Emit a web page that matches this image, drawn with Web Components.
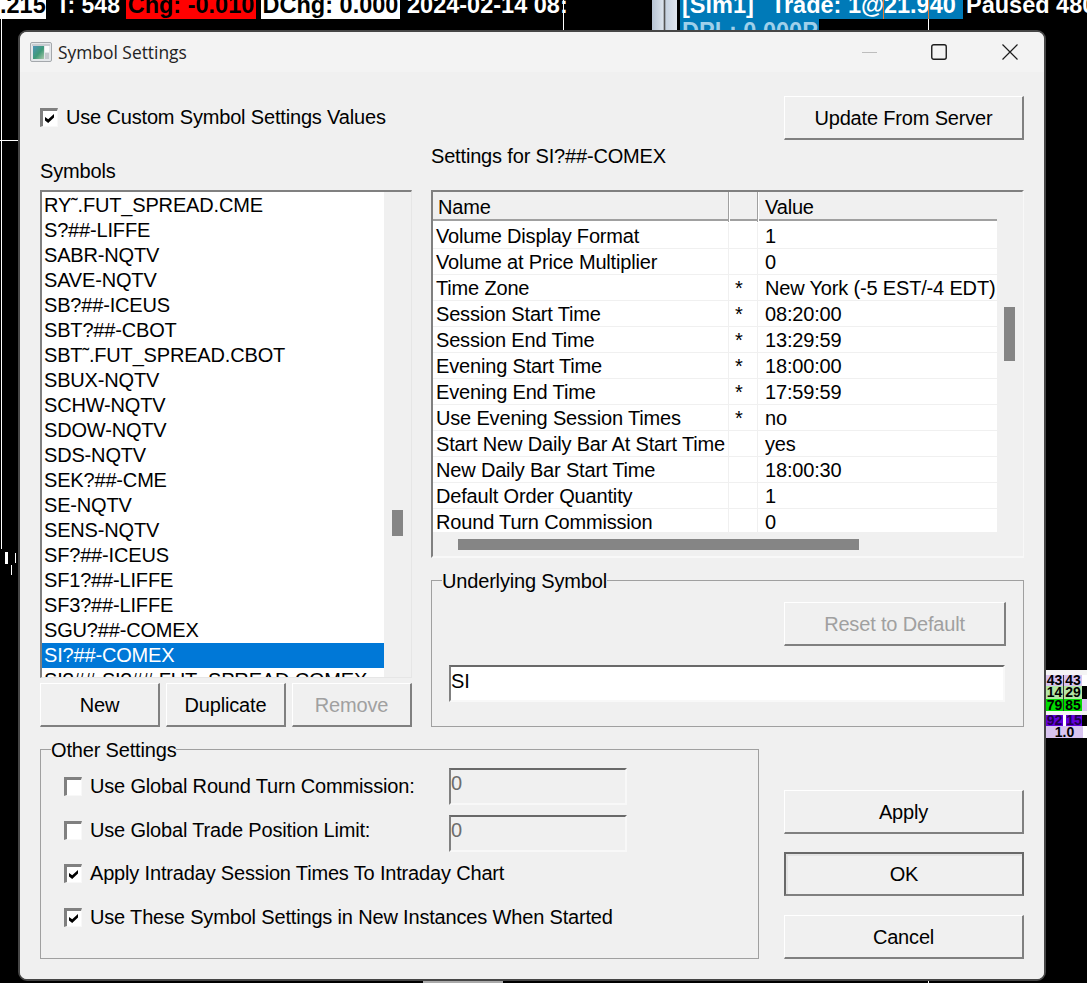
<!DOCTYPE html>
<html>
<head>
<meta charset="utf-8">
<title>Symbol Settings</title>
<style>
  html, body { margin: 0; padding: 0; background: #000; }
  body { font: 20px "Liberation Sans", Arial, sans-serif; color: #000; }
</style>
</head>
<body>
<chart-desktop>
  <symbol-dialog></symbol-dialog>
</chart-desktop>

<script>
const SYMBOLS = [
  "RY˜.FUT_SPREAD.CME", "S?##-LIFFE", "SABR-NQTV", "SAVE-NQTV", "SB?##-ICEUS", "SBT?##-CBOT",
  "SBT˜.FUT_SPREAD.CBOT", "SBUX-NQTV", "SCHW-NQTV", "SDOW-NQTV", "SDS-NQTV", "SEK?##-CME",
  "SE-NQTV", "SENS-NQTV", "SF?##-ICEUS", "SF1?##-LIFFE", "SF3?##-LIFFE", "SGU?##-COMEX",
  "SI?##-COMEX", "SI?##-SI?##.FUT_SPREAD.COMEX"
];

const SETTINGS = [
  ["Volume Display Format", "", "1"],
  ["Volume at Price Multiplier", "", "0"],
  ["Time Zone", "*", "New York (-5 EST/-4 EDT)"],
  ["Session Start Time", "*", "08:20:00"],
  ["Session End Time", "*", "13:29:59"],
  ["Evening Start Time", "*", "18:00:00"],
  ["Evening End Time", "*", "17:59:59"],
  ["Use Evening Session Times", "*", "no"],
  ["Start New Daily Bar At Start Time", "", "yes"],
  ["New Daily Bar Start Time", "", "18:00:30"],
  ["Default Order Quantity", "", "1"],
  ["Round Turn Commission", "", "0"]
];

class ChartDesktop extends HTMLElement {
  connectedCallback() {
    const shadowRoot = this.attachShadow({ mode: "open" });
    shadowRoot.innerHTML = `
    <style>
      :host { display: block; position: relative; width: 1087px; height: 983px; overflow: hidden; background: #000; }
      .lbl {
        position: absolute;
        top: -6px;
        height: 25px;
        font: bold 23.5px/23px "Liberation Sans", Arial, sans-serif;
        white-space: nowrap;
        color: #fff;
      }
      .dark { color: #000; }
      .mark { position: absolute; background: #fff; }
      .scroll { position: absolute; left: 652px; top: 0; width: 25px; height: 30px; background: linear-gradient(90deg, #b7c4d4, #dbe3ec 45%, #555 48%, #555 52%, #c6d2e0 55%, #e0e6ee); }
      .cells {
        position: absolute;
        left: 1046px;
        top: 670px;
        width: 41px;
        height: 68px;
        background: #fff;
        display: grid;
        grid-template-columns: 17px 19px 5px;
        grid-template-rows: 5px 11px 13px 12px 4px 11px 12px;
        font: bold 14px "Liberation Sans", Arial, sans-serif;
        text-align: center;
      }
      .cells div { overflow: hidden; }
      .top { grid-column: 1 / 4; background: #f4f4f4; }
      .fill { grid-column: 1 / 4; background: #f4f4f4; }
      .li { background: #d6c2ee; line-height: 11px; }
      .lg { background: #b4e6a4; line-height: 13px; }
      .gr { background: #00dc00; line-height: 12px; }
      .pu { background: #6400dc; color: #20004a; line-height: 11px; }
      .sep { border-left: 1px solid #333; }
      .bk { background: #000; }
      .wide { grid-column: 1 / 4; background: #d8c4f0; line-height: 12px; margin-right: 4px; }
    </style>
    <div class="lbl dark" style="left:0;width:46px;background:#fff">.215</div>
    <div class="lbl" style="left:56px;font-size:23px">T: 548</div>
    <div class="lbl dark" style="left:126px;width:130px;background:#f00;text-align:center">Chg: -0.010</div>
    <div class="lbl dark" style="left:261px;width:139px;background:#fff;text-align:center">DChg: 0.000</div>
    <div class="lbl" style="left:407px">2024-02-14 08:</div>
    <div class="scroll"></div>
    <div class="lbl" style="left:680px;width:283px;background:#007ab8;padding-left:2px;box-sizing:border-box">[Sim1]&nbsp; <span style="margin-left:4px">Trade: 1@21.940</span></div>
    <div class="lbl" style="left:966px">Paused 480</div>
    <div class="lbl" style="left:680px;top:19px;height:11px;width:139px;background:#007ab8;color:#9fd0ea;padding-left:2px;box-sizing:border-box;overflow:hidden;line-height:25px">DPL: 0.000P</div>
    <div class="mark" style="left:563px;top:0;width:1px;height:30px"></div>
    <div class="mark" style="left:883px;top:0;width:1px;height:19px;background:#e87a30"></div>
    <div class="mark" style="left:928px;top:0;width:1px;height:19px;background:#e87a30"></div>
    <div class="mark" style="left:928px;top:19px;width:1px;height:11px"></div>
    <div class="mark" style="left:1px;top:19px;width:1px;height:530px"></div>
    <div class="mark" style="left:0;top:140px;width:18px;height:1px"></div>
    <div class="mark" style="left:5px;top:552px;width:3px;height:12px"></div>
    <div class="mark" style="left:11px;top:565px;width:1px;height:10px"></div>
    <div class="mark" style="left:15px;top:553px;width:1px;height:10px"></div>
    <div class="mark" style="left:423px;top:981px;width:80px;height:2px;background:#aaa"></div>
    <div class="mark" style="left:928px;top:981px;width:1px;height:2px"></div>
    <div class="cells">
      <div class="top"></div>
      <div class="li">43</div><div class="li sep">43</div><div></div>
      <div class="lg">14</div><div class="lg sep">29</div><div class="bk"></div>
      <div class="gr">79</div><div class="gr sep">85</div><div class="li"></div>
      <div class="fill"></div>
      <div class="pu">92</div><div class="pu" style="margin-left:3px">15</div><div class="bk"></div>
      <div class="wide">1.0</div>
    </div>
    <slot></slot>
    `;
  }
}

class WinButton extends HTMLElement {
  connectedCallback() {
    const shadowRoot = this.attachShadow({ mode: "open" });
    shadowRoot.innerHTML = `
    <style>
      :host {
        display: flex;
        align-items: center;
        justify-content: center;
        box-sizing: border-box;
        width: 240px;
        height: 44px;
        padding-top: 2px;
        background: #f0f0f0;
        border-top: 1px solid #fff;
        border-left: 1px solid #fff;
        border-right: 2px solid #808080;
        border-bottom: 2px solid #808080;
        color: #000;
      }
      :host([disabled]) { color: #a0a0a0; }
      :host([default]) {
        padding-top: 0;
        border: 2px solid #696969;
        border-bottom-color: #808080;
        box-shadow: inset 2px 2px 0 #e3e3e3;
      }
    </style>
    <slot></slot>
    `;
  }
}

class WinCheck extends HTMLElement {
  connectedCallback() {
    const mark = this.hasAttribute("checked")
      ? `<svg width="10" height="9" viewBox="0 0 10 9"><path d="M0 3 L3.2 5.2 L9 0 L9 3.4 L3.2 9 L0 6.4 Z" fill="#000"/></svg>`
      : "";
    const shadowRoot = this.attachShadow({ mode: "open" });
    shadowRoot.innerHTML = `
    <style>
      :host { display: flex; align-items: center; gap: 8px; white-space: nowrap; }
      .box {
        box-sizing: border-box;
        flex: none;
        width: 18px;
        height: 19px;
        background: #fff;
        border-top: 3px solid #808080;
        border-left: 3px solid #808080;
        border-right: 1px solid #f8f8f8;
        border-bottom: 1px solid #f8f8f8;
        display: flex;
        align-items: center;
        justify-content: center;
      }
      svg { display: block; }
    </style>
    <span class="box">${mark}</span><slot></slot>
    `;
  }
}

class WinField extends HTMLElement {
  connectedCallback() {
    const shadowRoot = this.attachShadow({ mode: "open" });
    shadowRoot.innerHTML = `
    <style>
      :host {
        display: block;
        box-sizing: border-box;
        background: #fff;
        border-top: 2px solid #696969;
        border-left: 2px solid #808080;
        border-right: 2px solid #f8f8f8;
        border-bottom: 2px solid #f8f8f8;
        height: 37px;
        padding: 3px 0 0;
        line-height: 23px;
      }
      :host([disabled]) { background: #f0f0f0; color: #6d6d6d; padding-top: 2px; }
    </style>
    <slot></slot>
    `;
  }
}

class WinGroup extends HTMLElement {
  connectedCallback() {
    const shadowRoot = this.attachShadow({ mode: "open" });
    shadowRoot.innerHTML = `
    <style>
      :host { display: block; box-sizing: border-box; }
      fieldset {
        box-sizing: border-box;
        height: 100%;
        margin: 0;
        padding: 0;
        min-width: 0;
        border: 1px solid #a0a0a0;
      }
      legend { margin-left: 10px; padding: 0; line-height: 23px; background: #f0f0f0; }
      legend span { position: relative; top: 1px; }
    </style>
    <fieldset>
      <legend><span>${this.getAttribute("label")}</span></legend>
      <slot></slot>
    </fieldset>
    `;
  }
}

class SymbolList extends HTMLElement {
  connectedCallback() {
    const rows = SYMBOLS.map(s => `<div class="row${s === this.getAttribute("selected") ? " sel" : ""}">${s}</div>`).join("");
    const shadowRoot = this.attachShadow({ mode: "open" });
    shadowRoot.innerHTML = `
    <style>
      :host {
        display: flex;
        box-sizing: border-box;
        height: 488px;
        border-top: 2px solid #808080;
        border-left: 2px solid #808080;
        border-right: 1px solid #e6e6e6;
        border-bottom: 1px solid #e6e6e6;
      }
      .view { flex: 1; overflow: hidden; background: #fff; padding-top: 1px; }
      .row { height: 25px; line-height: 25px; padding-left: 2px; white-space: nowrap; }
      .sel { background: #0078d7; color: #fff; }
      .track { flex: none; width: 27px; background: #f0f0f0; padding: 318px 0 0 8px; box-sizing: border-box; }
      .thumb { width: 11px; height: 26px; background: #858585; }
    </style>
    <div class="view">${rows}</div>
    <div class="track"><div class="thumb"></div></div>
    `;
  }
}

class SettingsGrid extends HTMLElement {
  connectedCallback() {
    const rows = SETTINGS.map(r => `
      <div class="row"><div class="c name">${r[0]}</div><div class="c star">${r[1]}</div><div class="c val">${r[2]}</div></div>`).join("");
    const shadowRoot = this.attachShadow({ mode: "open" });
    shadowRoot.innerHTML = `
    <style>
      :host {
        display: grid;
        grid-template-columns: 564px 26px;
        grid-template-rows: 340px 24px;
        box-sizing: border-box;
        height: 368px;
        border-top: 2px solid #808080;
        border-left: 2px solid #808080;
        border-right: 2px solid #f8f8f8;
        border-bottom: 2px solid #f8f8f8;
      }
      .view { overflow: hidden; display: flex; flex-direction: column; background: #fff; }
      .head { flex: none; display: grid; grid-template-columns: 296px 29px 1fr; height: 29px; background: #f0f0f0; border-bottom: 2px solid #a0a0a0; box-sizing: border-box; }
      .head div { border-right: 1px solid #a0a0a0; box-shadow: 1px 0 0 #fff; padding: 1px 0 0 5px; line-height: 29px; }
      .head div:last-child { border-right: 0; box-shadow: none; padding-left: 7px; }
      .gap { flex: none; height: 2px; }
      .row { flex: none; display: grid; grid-template-columns: 296px 29px 1fr; height: 26px; box-sizing: border-box; border-bottom: 1px solid #f0f0f0; }
      .c { padding: 1px 0 0 3px; line-height: 25px; white-space: nowrap; overflow: hidden; border-right: 1px solid #f0f0f0; }
      .star { padding-left: 6px; }
      .val { padding-left: 7px; border-right: 0; }
      .vtrack { background: #f0f0f0; padding: 115px 0 0 7px; box-sizing: border-box; }
      .vthumb { width: 11px; height: 54px; background: #858585; }
      .htrack { background: #f0f0f0; padding: 7px 0 0 25px; box-sizing: border-box; }
      .hthumb { width: 401px; height: 11px; background: #858585; }
    </style>
    <div class="view">
      <div class="head"><div>Name</div><div></div><div>Value</div></div>
      <div class="gap"></div>
      ${rows}
    </div>
    <div class="vtrack"><div class="vthumb"></div></div>
    <div class="htrack"><div class="hthumb"></div></div>
    <div class="vtrack" style="padding:0"></div>
    `;
  }
}

class TitleBar extends HTMLElement {
  connectedCallback() {
    const shadowRoot = this.attachShadow({ mode: "open" });
    shadowRoot.innerHTML = `
    <style>
      :host {
        display: flex;
        align-items: center;
        flex: none;
        height: 40px;
        background: #f3f3f3;
        padding-left: 10px;
        font: 17.4px "Open Sans", "Noto Sans", sans-serif;
        letter-spacing: 0;
        color: #222;
      }
      .ico { flex: none; margin-right: 6px; display: block; }
      .name { flex: 1; }
      .caps { display: flex; align-items: center; }
      .caps svg { display: block; }
    </style>
    <svg class="ico" width="22" height="20" viewBox="0 0 22 20">
      <defs>
        <linearGradient id="pane" x1="0" y1="0" x2="1" y2="1">
          <stop offset="0" stop-color="#4f93b8"/>
          <stop offset="0.55" stop-color="#3f9a78"/>
          <stop offset="1" stop-color="#a8c8a8"/>
        </linearGradient>
      </defs>
      <rect x="0.5" y="0.5" width="21" height="19" rx="1.5" fill="#e4e7ea" stroke="#a4a8ac"/>
      <rect x="2" y="2" width="18" height="2" fill="#c8ccd0"/>
      <rect x="3" y="4" width="11" height="13" fill="url(#pane)"/>
      <rect x="15" y="4" width="4" height="6" fill="#fbfbfb"/>
      <rect x="15" y="11" width="4" height="6" fill="#c4c8cc"/>
    </svg>
    <span class="name">Symbol Settings</span>
    <div class="caps">
      <svg width="15" height="15" viewBox="0 0 15 15" style="margin-right:54px"><path d="M0 7.5H15" stroke="#bdbdbd"/></svg>
      <svg width="16" height="16" viewBox="0 0 16 16" style="margin-right:55px"><rect x="0.75" y="0.75" width="14.5" height="14.5" rx="2" fill="none" stroke="#1c1c1c" stroke-width="1.4"/></svg>
      <svg width="16" height="16" viewBox="0 0 16 16" style="margin-right:26px"><path d="M0.5 0.5L15.5 15.5M15.5 0.5L0.5 15.5" stroke="#1c1c1c" stroke-width="1.2"/></svg>
    </div>
    `;
  }
}

class SymbolDialog extends HTMLElement {
  connectedCallback() {
    const shadowRoot = this.attachShadow({ mode: "open" });
    shadowRoot.innerHTML = `
    <style>
      :host {
        display: flex;
        flex-direction: column;
        position: absolute;
        left: 18px;
        top: 30px;
        box-sizing: border-box;
        width: 1028px;
        height: 951px;
        background: #f0f0f0;
        border: 2px solid #464646;
        border-radius: 9px;
        overflow: hidden;
        font: 20px "Liberation Sans", Arial, sans-serif;
        letter-spacing: -0.17px;
        color: #000;
      }
      .body { flex: 1; padding: 24px 20px 0 20px; background: #f0f0f0; }
      .top { display: flex; justify-content: space-between; align-items: center; height: 44px; }
      .top win-check { padding-bottom: 1px; }
      .cols { display: flex; gap: 19px; height: 587px; }
      .left { width: 372px; }
      .right { width: 593px; }
      .cap-left { height: 50px; box-sizing: border-box; padding-top: 20px; line-height: 23px; }
      .cap-right { height: 50px; box-sizing: border-box; padding-top: 5px; line-height: 23px; }
      .btns { display: flex; gap: 6px; margin-top: 5px; }
      .btns win-button { width: 120px; }
      .under { height: 158px; margin-top: 11px; }
      .under-in { padding: 10px 17px 0 17px; }
      .under-in win-button { width: 222px; margin-left: auto; }
      .under-in win-field { margin-top: 19px; width: 556px; }
      .bottom { display: flex; justify-content: space-between; margin-top: 11px; }
      .other { width: 719px; height: 221px; }
      .other-in { padding: 3px 0 0 23px; }
      .row { display: flex; align-items: center; height: 44px; }
      .row win-check { width: 385px; }
      .row win-field { width: 178px; }
      .row .low { align-self: flex-end; }
      .row.tight { margin-top: -1px; margin-bottom: 1px; }
      .actions { width: 240px; display: flex; flex-direction: column; padding-top: 52px; }
      .actions win-button + win-button { margin-top: 18px; }
      .actions win-button:last-child { margin-top: 19px; }
    </style>
    <title-bar></title-bar>
    <div class="body">
      <div class="top">
        <win-check checked>Use Custom Symbol Settings Values</win-check>
        <win-button>Update From Server</win-button>
      </div>
      <div class="cols">
        <div class="left">
          <div class="cap-left">Symbols</div>
          <symbol-list selected="SI?##-COMEX"></symbol-list>
          <div class="btns">
            <win-button>New</win-button>
            <win-button>Duplicate</win-button>
            <win-button disabled>Remove</win-button>
          </div>
        </div>
        <div class="right">
          <div class="cap-right">Settings for SI?##-COMEX</div>
          <settings-grid></settings-grid>
          <win-group class="under" label="Underlying Symbol">
            <div class="under-in">
              <win-button disabled>Reset to Default</win-button>
              <win-field>SI</win-field>
            </div>
          </win-group>
        </div>
      </div>
      <div class="bottom">
        <win-group class="other" label="Other Settings">
          <div class="other-in">
            <div class="row"><win-check>Use Global Round Turn Commission:</win-check><win-field disabled>0</win-field></div>
            <div class="row"><win-check>Use Global Trade Position Limit:</win-check><win-field disabled class="low">0</win-field></div>
            <div class="row tight"><win-check checked>Apply Intraday Session Times To Intraday Chart</win-check></div>
            <div class="row tight"><win-check checked>Use These Symbol Settings in New Instances When Started</win-check></div>
          </div>
        </win-group>
        <div class="actions">
          <win-button>Apply</win-button>
          <win-button default>OK</win-button>
          <win-button>Cancel</win-button>
        </div>
      </div>
    </div>
    `;
  }
}

customElements.define("win-button", WinButton);
customElements.define("win-check", WinCheck);
customElements.define("win-field", WinField);
customElements.define("win-group", WinGroup);
customElements.define("symbol-list", SymbolList);
customElements.define("settings-grid", SettingsGrid);
customElements.define("title-bar", TitleBar);
customElements.define("symbol-dialog", SymbolDialog);
customElements.define("chart-desktop", ChartDesktop);
</script>
</body>
</html>
